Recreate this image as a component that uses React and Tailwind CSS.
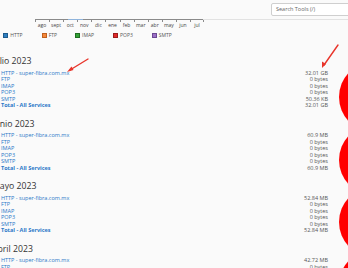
import React from "react";

const months = ["ago","sept","oct","nov","dic","ene","feb","mar","abr","may","jun","jul"];
const legend = [
  { label: "HTTP", bg: "bg-[#2f7fc1]", border: "border-[#1d5a8c]", w: "w-[38.4px]" },
  { label: "FTP", bg: "bg-[#f5873a]", border: "border-[#c0601e]", w: "w-[33.3px]" },
  { label: "IMAP", bg: "bg-[#33a135]", border: "border-[#1f6e21]", w: "w-[38px]" },
  { label: "POP3", bg: "bg-[#e02a2a]", border: "border-[#9c1b1b]", w: "w-[38.7px]" },
  { label: "SMTP", bg: "bg-[#9b6fc6]", border: "border-[#6c4892]", w: "w-[38px]" },
];

const sections = [
  { title: "Julio 2023", vals: ["32.01 GB", "0 bytes", "0 bytes", "0 bytes", "50.36 KB", "32.01 GB"] },
  { title: "Junio 2023", vals: ["60.9 MB", "0 bytes", "0 bytes", "0 bytes", "0 bytes", "60.9 MB"] },
  { title: "Mayo 2023", vals: ["52.84 MB", "0 bytes", "0 bytes", "0 bytes", "0 bytes", "52.84 MB"] },
  { title: "Abril 2023", vals: ["42.72 MB", "0 bytes", "0 bytes", "0 bytes", "0 bytes", "42.72 MB"] },
];
const names = ["HTTP - super-fibra.com.mx", "FTP", "IMAP", "POP3", "SMTP", "Total - All Services"];

export default function App() {
  return (
    <div className="relative w-[348px] h-[268px] overflow-hidden bg-[#fafafa] text-[#333]" style={{ fontFamily: '"Open Sans", "Liberation Sans", sans-serif' }}>
      {/* header */}
      <div className="h-[19px] flex justify-end items-start pt-[3px]">
        <div className="w-[80px] h-[13px] ml-auto mr-[-3px] border border-[#cfcfcf] rounded-[2px] bg-white flex items-center pl-[4px] text-[5.5px] text-[#666]">
          Search Tools (/)
        </div>
      </div>
      {/* axis line */}
      <div className="flex h-px">
        <div className="w-[35px]" />
        <div className="w-[33px] bg-[#8a8a8a]" />
        <div className="w-[15px] bg-[#8fb4dc]" />
        <div className="w-[120px] bg-[#8a8a8a]" />
        <div className="flex-1 bg-[#e2e2e2]" />
      </div>
      {/* ticks + labels */}
      <div className="flex pl-[35px] h-[9px]">
        {months.map((m, i) => (
          <div key={m} className="relative w-[14.1px] h-full">
            <div className="absolute left-0 top-0 w-px h-[2px] bg-[#8a8a8a]" />
            {i === 11 && <div className="absolute right-0 top-0 w-px h-[2px] bg-[#8a8a8a]" />}
            <div className="text-center text-[5px] leading-none pt-[2.5px] text-[#444]">{m}</div>
          </div>
        ))}
      </div>
      {/* legend */}
      <div className="flex items-center pl-[3.3px] mt-[2px] h-[8px]">
        {legend.map((l) => (
          <div key={l.label} className={`${l.w} flex items-center gap-[2px] shrink-0`}>
            <div className={`w-[5px] h-[5px] border ${l.bg} ${l.border}`} />
            <span className="text-[5px] leading-none text-[#555]">{l.label}</span>
          </div>
        ))}
      </div>
      {/* sections */}
      <div className="mt-[16px]">
        {sections.map((s) => (
          <div key={s.title} className="flex items-start h-[62.5px]">
            <div className="w-[339px] shrink-0 pl-[1px] pr-[11px]">
              <div className="ml-[-9px] text-[8.7px] leading-[12px] text-[#333]">{s.title}</div>
              <div className="mt-[2.75px]">
                {names.map((n, i) => (
                  <div key={n} className="flex justify-between h-[6.5px] leading-[6.5px] text-[5.5px]">
                    <span className={`text-[#2a78c8] ${i === 5 ? "font-bold" : ""}`}>{n}</span>
                    <span className="text-[#555]">{s.vals[i]}</span>
                  </div>
                ))}
              </div>
            </div>
            <div className="w-[70px] h-[70px] mt-[7px] shrink-0 rounded-full bg-[#ff0000]" />
          </div>
        ))}
      </div>
      {/* annotation arrows */}
      <svg className="absolute left-0 top-0 pointer-events-none" width="348" height="268" viewBox="0 0 348 268">
        <g stroke="#e8352b" strokeWidth="1.4" fill="none" strokeLinecap="round">
          <line x1="88" y1="59" x2="70" y2="70" />
          <line x1="338" y1="45" x2="324" y2="65" />
        </g>
        <g fill="#e8352b">
          <polygon points="67,72 71.5,66.5 73.5,70" />
          <polygon points="322,68 322,61.5 326,64" />
        </g>
      </svg>
    </div>
  );
}
